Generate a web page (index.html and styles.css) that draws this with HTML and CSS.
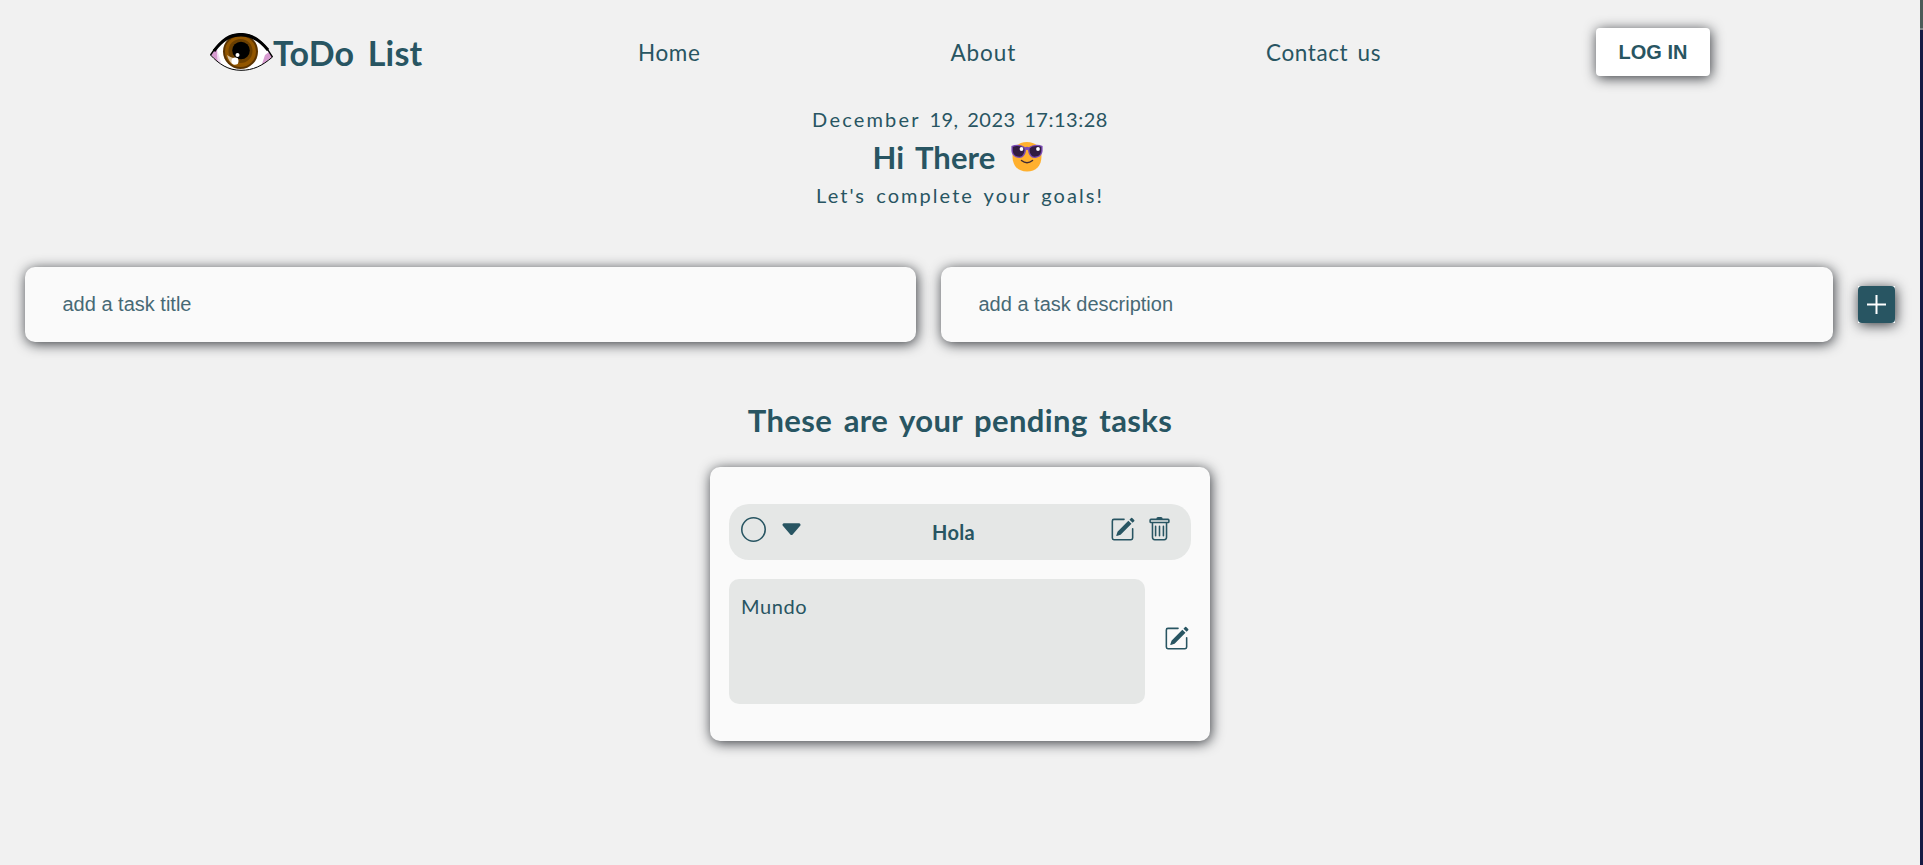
FILE: index.html
```html
<!DOCTYPE html>
<html lang="en">
<head>
<meta charset="utf-8">
<title>ToDo List</title>
<link rel="stylesheet" href="styles.css">
</head>
<body>
<svg class="defs" width="0" height="0">
  <symbol id="pencil" viewBox="0 0 16 16">
    <path d="M15.502 1.94a.5.5 0 0 1 0 .706L14.459 3.69l-2-2L13.502.646a.5.5 0 0 1 .707 0l1.293 1.293zm-1.75 2.456-2-2L4.939 9.21a.5.5 0 0 0-.121.196l-.805 2.414a.25.25 0 0 0 .316.316l2.414-.805a.5.5 0 0 0 .196-.12l6.813-6.814z"/>
    <path fill-rule="evenodd" d="M1 13.5A1.5 1.5 0 0 0 2.5 15h11a1.5 1.5 0 0 0 1.5-1.5v-6a.5.5 0 0 0-1 0v6a.5.5 0 0 1-.5.5h-11a.5.5 0 0 1-.5-.5v-11a.5.5 0 0 1 .5-.5H9a.5.5 0 0 0 0-1H2.5A1.5 1.5 0 0 0 1 2.5v11z"/>
  </symbol>
</svg>
<div class="page">
  <nav class="nav">
    <a class="logo">
      <svg class="eye" viewBox="0 0 63 38">
        <defs><clipPath id="lens"><path d="M1 22C12 7 20 1.5 31 1.500C43 1.500 52 8 62 24C52 33 43 37 31 37C18 37 9 31 1 22z"/></clipPath></defs>
        <g clip-path="url(#lens)">
          <rect width="63" height="38" fill="#fff"/>
          <path d="M0 14L7 17L8 30L0 27z" fill="#d79bd0"/>
          <path d="M7 16L12 33L8 30z" fill="#f0dcf0"/>
          <path d="M63 16L55 22L51 34L63 28z" fill="#d79bd0"/>
          <circle cx="30.500" cy="18.500" r="17.500" fill="#5a3300"/>
          <circle cx="30.500" cy="18.500" r="15.500" fill="#925600"/>
          <circle cx="30.500" cy="18" r="12" fill="#6b3f00"/>
          <circle cx="31" cy="17.500" r="8.800" fill="#000"/>
          <path d="M17 22C20 24 24 26 28 25L28 31L24 32C20 30 18 26 17 22z" fill="#dcc6a3"/>
          <circle cx="25" cy="28" r="3.500" fill="#fff"/>
          <circle cx="27.500" cy="22" r="2" fill="#fff"/>
        </g>
        <path d="M.5 22C12 5 20 .7 31 .7C43 .7 52 7 62.500 24" fill="none" stroke="#000" stroke-width="1.500"/>
        <path d="M4 18C13 6 21 2 31 2C42 2 50 7 58 17" fill="none" stroke="#000" stroke-width="3"/>
        <path d="M.5 22C9 31 18 37.300 31 37.300C43 37.300 52 33 62.500 24" fill="none" stroke="#000" stroke-width="1"/>
      </svg>
      <span class="brand">ToDo List</span>
    </a>
    <div class="links">
      <a class="link home">Home</a>
      <a class="link about">About</a>
      <a class="link contact">Contact us</a>
    </div>
    <button class="login">LOG IN</button>
  </nav>

  <header class="greeting">
    <p class="date"><span class="month">December</span> 19, 2023 17:13:28</p>
    <h1 class="hello"><span class="hi">Hi There</span>
      <svg class="cool" viewBox="0 0 32 30">
        <path d="M1.500 14C1.500 5 8 0 16 0S30.500 5 30.500 14C30.500 24 25 29.500 16 29.500S1.500 24 1.500 14z" fill="#ffb02e"/>
        <path d="M.4 4C5 1.800 11 2.500 14 5.200Q16 4.300 18 5.200C21 2.500 27 1.800 31.600 4V9C31 14 27 16 23.500 16C20 16 17.500 13 17 8.300Q16 7.300 15 8.300C14.500 13 12 16 8.500 16C5 16 1 14 .4 9z" fill="#7b4cb5"/>
        <path d="M1.800 5C5 3.300 11 3.500 13.300 6.500C14 10 12 14.700 8.500 14.700C5 14.700 2 13 1.800 8.500zM30.200 5C27 3.300 21 3.500 18.700 6.500C18 10 20 14.700 23.500 14.700C27 14.700 30 13 30.200 8.500z" fill="#321b41"/>
        <circle cx="10.500" cy="7" r="1.900" fill="#fff"/><circle cx="27" cy="7" r="1.900" fill="#fff"/>
        <path d="M10.500 18.500Q16 23 21.500 18.500" fill="none" stroke="#402a32" stroke-width="1.500" stroke-linecap="round"/>
      </svg>
    </h1>
    <p class="tagline">Let's complete your goals!</p>
  </header>

  <form class="add">
    <input class="field name" type="text" placeholder="add a task title">
    <input class="field" type="text" placeholder="add a task description">
    <button class="plus" type="button" aria-label="Add">
      <svg viewBox="0 0 37 37"><rect width="37" height="37" rx="4" fill="#285562"/><path d="M18.500 9v19M9 18.500h19" stroke="#fff" stroke-width="2"/></svg>
    </button>
  </form>

  <main class="tasks">
    <h2 class="pending">These are your pending tasks</h2>
    <section class="card">
      <div class="task">
        <svg class="icon" viewBox="0 0 16 16"><path d="M8 15A7 7 0 1 1 8 1a7 7 0 0 1 0 14m0 1A8 8 0 1 0 8 0a8 8 0 0 0 0 16"/></svg>
        <svg class="icon" viewBox="0 0 16 16"><path d="M7.247 11.140 2.451 5.658C1.885 5.013 2.345 4 3.204 4h9.592a1 1 0 0 1 .753 1.659l-4.796 5.480a1 1 0 0 1-1.506 0z"/></svg>
        <h3 class="title">Hola</h3>
        <svg class="icon"><use href="#pencil"/></svg>
        <svg class="icon" viewBox="0 0 16 16"><path d="M5.500 5.500A.5.500 0 0 1 6 6v6a.5.500 0 0 1-1 0V6a.5.500 0 0 1 .5-.5m2.500 0a.5.500 0 0 1 .5.500v6a.5.500 0 0 1-1 0V6a.5.500 0 0 1 .5-.5m3 .5a.5.500 0 0 0-1 0v6a.5.500 0 0 0 1 0z"/><path d="M14.500 3a1 1 0 0 1-1 1H13v9a2 2 0 0 1-2 2H5a2 2 0 0 1-2-2V4h-.5a1 1 0 0 1-1-1V2a1 1 0 0 1 1-1H6a1 1 0 0 1 1-1h2a1 1 0 0 1 1 1h3.500a1 1 0 0 1 1 1zM4.118 4 4 4.059V13a1 1 0 0 0 1 1h6a1 1 0 0 0 1-1V4.059L11.882 4zM2.500 3h11V2h-11z"/></svg>
      </div>
      <div class="detail">
        <div class="description">Mundo</div>
        <svg class="icon"><use href="#pencil"/></svg>
      </div>
    </section>
  </main>
</div>
<div class="edge"></div>
</body>
</html>
```

FILE: styles.css
```css
* { box-sizing: border-box; margin: 0; }
body {
  display: flex;
  height: 865px;
  overflow: hidden;
  background: #f1f1f1;
  color: #285562;
  font-family: Lato, "Open Sans", sans-serif;
  white-space: nowrap;
}
.defs { position: absolute; }
.page { flex: 1; }
.edge { width: 3px; background: linear-gradient(#4c5b58 28px, #7f8688 28px 30px, #161a43 30px); }

.nav { display: flex; align-items: center; justify-content: space-between; width: 1500px; height: 104px; margin: 0 auto; }
.logo { display: flex; align-items: center; width: 214px; }
.eye { width: 63px; height: 38px; flex: none; }
.brand { padding-top: 1px; font-size: 34px; font-weight: 700; line-height: 40px; letter-spacing: 0.200px; word-spacing: 5px; }
.links { display: flex; justify-content: space-between; width: 743px; padding-top: 1px; margin-left: -1px; }
.link { font-size: 22.500px; line-height: 30px; }
.home { width: 62px; letter-spacing: 0.6px; }
.about { width: 65px; letter-spacing: 0.9px; }
.contact { width: 115px; letter-spacing: 0.6px; word-spacing: 3px; }
.login {
  width: 114px; height: 48px; padding: 0; border: 0; border-radius: 4px;
  background: #fff; color: #285562;
  font: 700 20px "Liberation Sans", Arial, sans-serif;
  box-shadow: 1px 2px 13px #35383d;
}

.greeting { display: flex; flex-direction: column; align-items: center; }
.date, .tagline { font-size: 20px; line-height: 30px; word-spacing: 3px; }
.date { letter-spacing: 0.500px; }
.month { letter-spacing: 2.200px; }
.tagline { letter-spacing: 2.050px; }
.hello { display: flex; align-items: center; gap: 16px; height: 46px; padding-right: 4px; font-size: 31px; line-height: 46px; word-spacing: 4px; letter-spacing: 0.100px; }
.cool { width: 32px; height: 30px; }

.add { display: flex; align-items: center; gap: 25px; padding: 0 25px; margin-top: 57px; }
.field {
  flex: 1; min-width: 0; height: 75px; padding: 0 37.500px; border: 0; border-radius: 10px;
  background: #fafafa; box-shadow: 1px 2px 13px #35383d;
  font: 20px "Liberation Sans", Arial, sans-serif;
}
.name { flex: 0 0 891px; }
.field::placeholder { color: #476975; opacity: 1; }
.plus { width: 37px; height: 37px; padding: 0; border: 0; background: #fff; box-shadow: 1px 2px 13px #35383d; }
.plus svg { display: block; }

.tasks { display: flex; flex-direction: column; align-items: center; margin-top: 56px; }
.pending { font-size: 31px; line-height: 44px; letter-spacing: 0.400px; word-spacing: 3.500px; }
.card { width: 500px; height: 274px; margin-top: 25px; padding: 37px 19px; border-radius: 10px; background: #fafafa; box-shadow: 1px 2px 13px #35383d; }
.icon { flex: none; width: 25px; height: 25px; fill: #285562; }
.task { display: flex; gap: 12.500px; height: 56px; padding: 13px 19px 0 12px; border-radius: 20px; background: #e5e7e6; }
.title { flex: 1; padding-right: 6px; text-align: center; font-size: 20px; line-height: 31px; letter-spacing: 0.300px; }
.detail { display: flex; align-items: center; gap: 18.500px; margin-top: 19px; }
.description { width: 416px; height: 125px; padding: 12px; border-radius: 10px; background: #e5e7e6; font-size: 20px; line-height: 30px; letter-spacing: 0.600px; }
.detail .icon { margin-top: -6px; }
```
